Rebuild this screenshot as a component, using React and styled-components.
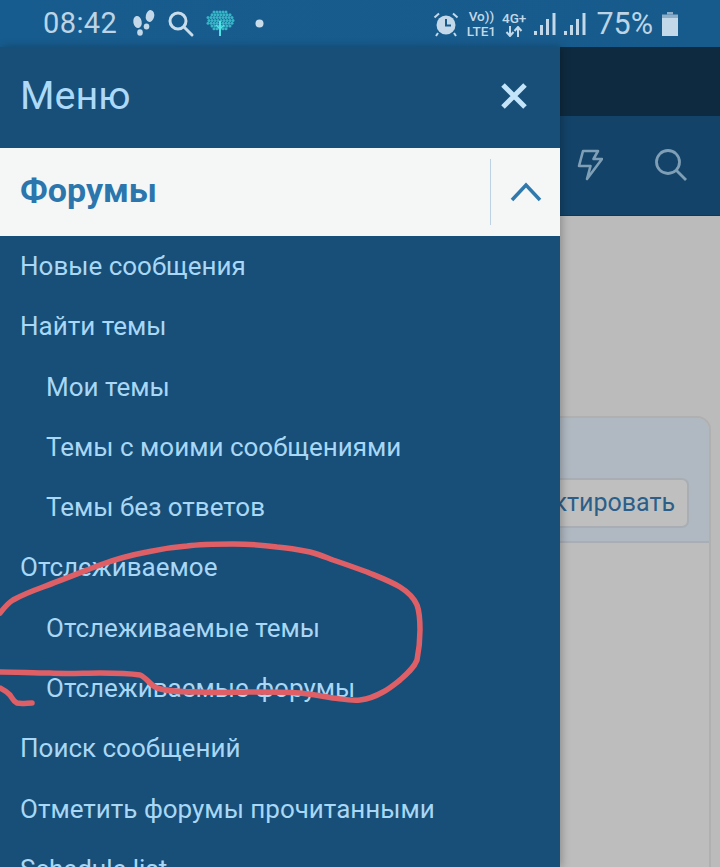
import React from "react";
import styled, { createGlobalStyle } from "styled-components";

const Global = createGlobalStyle`
  html, body { margin: 0; padding: 0; background: #bbb; }
  body { font-family: Roboto, "Noto Sans", sans-serif; }
`;

const Screen = styled.div`
  position: relative;
  width: 720px;
  height: 867px;
  overflow: hidden;
  display: flex;
  flex-direction: column;
  background: #bbb;
`;

const StatusBar = styled.div`
  flex: 0 0 47px;
  height: 47px;
  background: linear-gradient(90deg, #175c8e, #175b8c);
  display: flex;
  align-items: center;
  justify-content: space-between;
  padding: 0 42px 0 43px;
  box-sizing: border-box;
  color: #c3d8e8;
`;

const StatusGroup = styled.div`
  display: flex;
  align-items: center;
`;

const Clock = styled.span`
  font-size: 29px;
  line-height: 47px;
  letter-spacing: 0.4px;
  color: #bdd4e6;
  margin-right: 15px;
`;

const Percent = styled.span`
  font-size: 30.5px;
  line-height: 47px;
  color: #bdd4e6;
  margin: 0 9px 0 10px;
`;

const NetLabel = styled.span`
  display: flex;
  flex-direction: column;
  align-items: center;
  font-size: 13.5px;
  font-weight: 500;
  line-height: 15px;
  color: #c3d8e8;
  margin-left: ${p => p.$gap || 0}px;
`;

const Body = styled.div`
  flex: 1;
  display: flex;
  min-height: 0;
`;

const Drawer = styled.nav`
  flex: 0 0 560px;
  background: #174f78;
  display: flex;
  flex-direction: column;
  box-shadow: 2px 0 8px rgba(0, 0, 0, 0.25);
  z-index: 1;
`;

const DrawerHead = styled.div`
  flex: 0 0 101px;
  display: flex;
  align-items: center;
  justify-content: space-between;
  padding: 0 33px 4px 20px;
  box-sizing: border-box;
`;

const DrawerTitle = styled.h1`
  margin: 0;
  font-size: 39.5px;
  font-weight: 400;
  color: #addaf8;
`;

const SectionRow = styled.div`
  flex: 0 0 88px;
  display: flex;
  align-items: center;
  background: #f5f6f6;
  box-sizing: border-box;
  padding: 0 0 0 20px;
`;

const SectionTitle = styled.span`
  flex: 1;
  font-size: 34px;
  font-weight: 700;
  color: #2b76ad;
  margin-bottom: 4px;
`;

const SectionToggle = styled.div`
  flex: 0 0 69px;
  height: 66px;
  border-left: 1px solid #bdd3e3;
  display: flex;
  align-items: center;
  justify-content: center;
`;

const MenuList = styled.ul`
  list-style: none;
  margin: 0;
  padding: 0;
`;

const MenuItem = styled.li`
  height: 60.3px;
  line-height: 60px;
  padding-left: ${p => (p.$nested ? 46 : 20)}px;
  font-size: 26px;
  color: #a9d7f6;
  white-space: nowrap;
`;

const Page = styled.div`
  flex: 1;
  min-width: 0;
  display: flex;
  flex-direction: column;
`;

const TopBand = styled.div`
  flex: 0 0 69px;
  background: #0e2a40;
`;

const NavBand = styled.div`
  flex: 0 0 100px;
  background: #134369;
  display: flex;
  align-items: center;
  gap: 51px;
  padding: 0 0 2px 17px;
  box-sizing: border-box;
  border-bottom: 1px solid #0f3957;
`;

const PageBody = styled.div`
  flex: 1;
  background: #bbbbbb;
  padding: 200px 9px 0 0;
  display: flex;
  flex-direction: column;
`;

const Card = styled.div`
  flex: 1;
  background: #bdbdbd;
  border: 2px solid #b0b0b0;
  border-left: 0;
  border-bottom: 0;
  border-radius: 0 14px 0 0;
  display: flex;
  flex-direction: column;
`;

const CardHead = styled.div`
  flex: 0 0 125px;
  box-sizing: border-box;
  background: #b0b8c2;
  border-bottom: 2px solid #a9aeb4;
  border-radius: 0 12px 0 0;
  padding: 60px 20px 0 0;
  display: flex;
  justify-content: flex-end;
`;

const EditButton = styled.div`
  width: 129px;
  height: 50px;
  box-sizing: border-box;
  display: flex;
  justify-content: flex-end;
  background: #bfbfbf;
  border: 2px solid #a8aeb4;
  border-left: 0;
  border-radius: 0 7px 7px 0;
  font-size: 25px;
  line-height: 46px;
  padding-right: 12px;
  color: #2b5f8a;
  white-space: nowrap;
`;

const Scribble = styled.svg`
  position: absolute;
  left: 0;
  top: 0;
  pointer-events: none;
  z-index: 2;
`;

const Icon = styled.svg`
  display: block;
  flex: none;
  margin-left: ${p => p.$gap || 0}px;
  margin-right: ${p => p.$after || 0}px;
`;

const Footsteps = () => (
  <Icon $after={11} width="24" height="30" viewBox="0 0 24 30" fill="#c3d8e8">
    <ellipse cx="5.5" cy="13" rx="4.2" ry="6" transform="rotate(-10 5.5 13)" />
    <ellipse cx="8" cy="23.5" rx="2.8" ry="3.2" />
    <ellipse cx="18" cy="7" rx="4.2" ry="6" transform="rotate(12 18 7)" />
    <ellipse cx="14.5" cy="17.5" rx="2.8" ry="3" />
  </Icon>
);

const StatusSearch = () => (
  <Icon $after={10} width="28" height="28" viewBox="0 0 28 28" fill="none" stroke="#c9dcea" strokeWidth="3" strokeLinecap="round">
    <circle cx="11" cy="11" r="8" />
    <path d="M17 17l8 8" />
  </Icon>
);

const Tree = () => {
  const dots = [];
  for (let y = 0; y < 7; y++) {
    for (let x = 0; x < 9; x++) {
      const dx = (x - 4) / 4.6;
      const dy = (y - 3) / 3.4;
      if (dx * dx + dy * dy < 1) dots.push(<circle key={`${x}-${y}`} cx={3 + x * 3 + (y % 2) * 1} cy={3 + y * 2.8} r="1.5" />);
    }
  }
  return (
    <Icon $after={20} width="30" height="30" viewBox="0 0 30 30" fill="#37b4c6">
      {dots}
      <path d="M15 12v15" stroke="#4fe3e6" strokeWidth="2" />
      <path d="M15 20l-4-4M15 20l4-4" stroke="#4fe3e6" strokeWidth="1.2" />
    </Icon>
  );
};

const Alarm = () => (
  <Icon width="26" height="26" viewBox="0 0 26 26" fill="none">
    <circle cx="13" cy="14" r="9.5" fill="#c3d8e8" />
    <path d="M13 8v6.5h5" stroke="#175b8c" strokeWidth="2" />
    <path d="M1.5 6.5L6 2.5M24.5 6.5L20 2.5M5 22l-2 3M21 22l2 3" stroke="#c3d8e8" strokeWidth="2" />
  </Icon>
);

const Signal = ({ gap }) => (
  <Icon $gap={gap} width="22" height="24" viewBox="0 0 22 24" fill="#c3d8e8">
    <rect x="0" y="19" width="3" height="4" />
    <rect x="6" y="13" width="3" height="10" />
    <rect x="12" y="7" width="3" height="16" />
    <rect x="18.5" y="1" width="3" height="22" />
  </Icon>
);

const Battery = () => (
  <Icon width="16" height="24" viewBox="0 0 16 24" fill="#c3d8e8">
    <path d="M5 0h6v2.5H5z" fill="#8eaec8" />
    <path d="M0 2.5h16V6H0z" fill="#8eaec8" />
    <rect x="0" y="6" width="16" height="18" />
  </Icon>
);

const Arrows = () => (
  <svg width="18" height="11" viewBox="0 0 18 11" fill="none" stroke="#c3d8e8" strokeWidth="2">
    <path d="M5 0v9M1.5 6L5 10l3.5-4M13 11V2M9.5 5L13 1l3.5 4" />
  </svg>
);

const Close = () => (
  <svg width="26" height="26" viewBox="0 0 26 26" stroke="#c4e4fa" strokeWidth="5">
    <path d="M2 2l22 22M24 2L2 24" />
  </svg>
);

const Chevron = () => (
  <svg width="32" height="20" viewBox="0 0 32 20" fill="none" stroke="#2f79ad" strokeWidth="3.5">
    <path d="M2 18L16 3l14 15" />
  </svg>
);

const Bolt = () => (
  <svg width="26" height="32" viewBox="0 0 26 32" fill="none" stroke="#7f9fb6" strokeWidth="2.6" strokeLinejoin="round">
    <path d="M6 2h15l-4.5 8H25L10 30l3.5-13H2z" />
  </svg>
);

const NavSearch = () => (
  <svg width="34" height="34" viewBox="0 0 34 34" fill="none" stroke="#7f9fb6" strokeWidth="2.8">
    <circle cx="14" cy="14" r="11.5" />
    <path d="M22.5 22.5L32 32" />
  </svg>
);

const items = [
  ["Новые сообщения"],
  ["Найти темы"],
  ["Мои темы", true],
  ["Темы с моими сообщениями", true],
  ["Темы без ответов", true],
  ["Отслеживаемое"],
  ["Отслеживаемые темы", true],
  ["Отслеживаемые форумы", true],
  ["Поиск сообщений"],
  ["Отметить форумы прочитанными"],
  ["Schedule list"],
];

export default function App() {
  return (
    <Screen>
      <Global />
      <StatusBar>
        <StatusGroup>
          <Clock>08:42</Clock>
          <Footsteps />
          <StatusSearch />
          <Tree />
          <svg width="9" height="9" viewBox="0 0 9 9"><circle cx="4.5" cy="4.5" r="4" fill="#c9dcea" /></svg>
        </StatusGroup>
        <StatusGroup>
          <Alarm />
          <NetLabel $gap={8}><span>Vo))</span><span>LTE1</span></NetLabel>
          <NetLabel $gap={6}><span>4G+</span><Arrows /></NetLabel>
          <Signal gap={8} />
          <Signal gap={8} />
          <Percent>75%</Percent>
          <Battery />
        </StatusGroup>
      </StatusBar>
      <Body>
        <Drawer>
          <DrawerHead>
            <DrawerTitle>Меню</DrawerTitle>
            <Close />
          </DrawerHead>
          <SectionRow>
            <SectionTitle>Форумы</SectionTitle>
            <SectionToggle><Chevron /></SectionToggle>
          </SectionRow>
          <MenuList>
            {items.map(([label, nested]) => (
              <MenuItem key={label} $nested={nested}>{label}</MenuItem>
            ))}
          </MenuList>
        </Drawer>
        <Page>
          <TopBand />
          <NavBand>
            <Bolt />
            <NavSearch />
          </NavBand>
          <PageBody>
            <Card>
              <CardHead>
                <EditButton>Редактировать</EditButton>
              </CardHead>
            </Card>
          </PageBody>
        </Page>
      </Body>
      <Scribble width="720" height="867" viewBox="0 0 720 867" fill="none" stroke="#df5f66" strokeWidth="5.5" strokeLinecap="round" strokeLinejoin="round">
        <path d="M0 613C4 608 8 603 13 600C22 595 32 591 43 587C62 580 82 572 100 565C116 559 131 555 147 552C160 549 173 547 187 546C202 544 218 544 233 544C248 544 263 545 277 547C289 548 300 550 310 552C318 554 325 557 333 560C345 564 356 568 367 572C379 577 390 581 400 587C408 592 414 598 417 605C420 613 420 622 420 630C420 640 419 650 417 660C414 668 407 674 400 680C395 684 389 689 383 692C376 696 368 699 360 700C351 701 342 699 333 698C322 696 311 694 300 693C283 692 267 692 250 692C233 692 217 693 200 692C185 692 170 692 157 688C150 685 147 678 140 675C127 673 113 673 100 673C83 673 67 674 50 673C33 673 17 672 0 672" />
        <path d="M0 688C4 690 7 692 10 695C12 698 13 701 17 703C22 704 27 703 32 703" />
      </Scribble>
    </Screen>
  );
}
